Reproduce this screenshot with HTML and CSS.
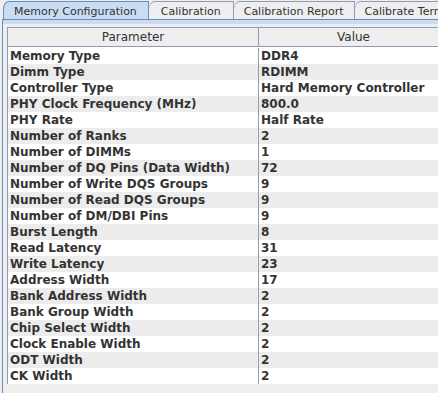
FILE: index.html
```html
<!DOCTYPE html>
<html lang="en">
<head>
    <meta charset="UTF-8">
    <title>Memory Configuration</title>
    <link rel="stylesheet" href="styles.css">
</head>
<body>
    <div class="tab-pane">
        <div class="tab-row">
            <div class="tab selected">Memory Configuration</div>
            <div class="tab wide">Calibration</div>
            <div class="tab">Calibration Report</div>
            <div class="tab">Calibrate Termination</div>
        </div>
        <div class="tab-strip"></div>
        <div class="tab-body">
            <div class="param-table">
                <div class="table-header">
                    <div class="head-cell">Parameter</div>
                    <div class="head-cell">Value</div>
                </div>
                <div class="table-rows" id="rows"></div>
            </div>
        </div>
    </div>

    <script>
        // parameter list
        const params = [
            ['Memory Type', 'DDR4'],
            ['Dimm Type', 'RDIMM'],
            ['Controller Type', 'Hard Memory Controller'],
            ['PHY Clock Frequency (MHz)', '800.0'],
            ['PHY Rate', 'Half Rate'],
            ['Number of Ranks', '2'],
            ['Number of DIMMs', '1'],
            ['Number of DQ Pins (Data Width)', '72'],
            ['Number of Write DQS Groups', '9'],
            ['Number of Read DQS Groups', '9'],
            ['Number of DM/DBI Pins', '9'],
            ['Burst Length', '8'],
            ['Read Latency', '31'],
            ['Write Latency', '23'],
            ['Address Width', '17'],
            ['Bank Address Width', '2'],
            ['Bank Group Width', '2'],
            ['Chip Select Width', '2'],
            ['Clock Enable Width', '2'],
            ['ODT Width', '2'],
            ['CK Width', '2']
        ];

        const rows = document.getElementById('rows');
        params.forEach(function(p, i) {
            const row = document.createElement('div');
            row.className = 'row' + (i % 2 ? ' alt' : '');
            const name = document.createElement('div');
            name.className = 'cell';
            name.textContent = p[0];
            const value = document.createElement('div');
            value.className = 'cell value';
            value.textContent = p[1];
            row.appendChild(name);
            row.appendChild(value);
            rows.appendChild(row);
        });
    </script>
</body>
</html>
```

FILE: styles.css
```css
body {
    margin: 0;
    background-color: #eeeeee;
    font-family: 'DejaVu Sans', sans-serif;
    font-size: 12px;
    color: #333333;
    overflow: hidden;
    width: 438px;
    height: 393px;
}
.tab-pane {
    height: 393px;
    display: flex;
    flex-direction: column;
}
.tab-row {
    display: flex;
    padding: 1px 0 0 3px;
    height: 19px;
    box-sizing: border-box;
    white-space: nowrap;
    overflow: hidden;
}
.tab {
    flex: none;
    padding: 2px 10px 0 10px;
    border: 1px solid #8e9bb4;
    border-bottom: none;
    border-left: none;
    border-top-left-radius: 6px 8px;
    background-color: #eeeeee;
    font-size: 11px;
    line-height: 15px;
    color: #333333;
}
.tab:first-child {
    border-left: 1px solid #8e9bb4;
}
.tab.wide {
    padding: 2px 12px 0 12px;
}
.tab.selected {
    background-color: #c8ddf2;
    border-color: #6c8bbd;
    padding-right: 11px;
}
.tab-strip {
    height: 4px;
    background-color: #c8ddf2;
    border-top: 1px solid #6c8bbd;
    border-left: 1px solid #6c8bbd;
    margin-left: 2px;
}
.tab-body {
    flex: 1;
    border-left: 1px solid #6c8bbd;
    margin-left: 2px;
    padding: 3px 0 0 4px;
    overflow: hidden;
}
.param-table {
    width: 440px;
    border-left: 1px solid #8e9bb4;
    border-top: 1px solid #8e9bb4;
    background-color: #ffffff;
}
.table-header {
    display: grid;
    grid-template-columns: 250px 1fr;
    height: 18px;
    border-bottom: 1px solid #8e9bb4;
    background-color: #eeeeee;
}
.head-cell {
    text-align: center;
    line-height: 18px;
    font-size: 12px;
    color: #333333;
}
.head-cell + .head-cell {
    border-left: 1px solid #8e9bb4;
}
.table-rows {
    padding-top: 1px;
}
.row {
    display: grid;
    grid-template-columns: 250px 1fr;
    height: 16px;
    background-color: #ffffff;
}
.row.alt {
    background-color: #ececec;
}
.cell {
    font-weight: bold;
    line-height: 16px;
    padding-left: 2px;
    white-space: nowrap;
    overflow: hidden;
}
.cell.value {
    border-left: 1px solid #8e9bb4;
}
```
